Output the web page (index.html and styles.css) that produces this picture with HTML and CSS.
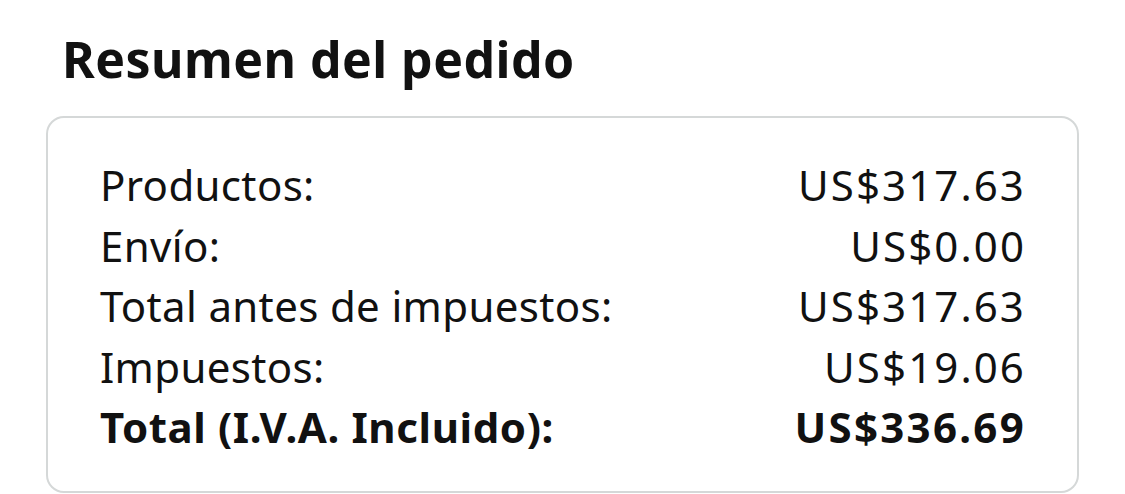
FILE: index.html
```html
<!DOCTYPE html>
<html lang="es">
<head>
<meta charset="utf-8">
<link rel="stylesheet" href="styles.css">
</head>
<body>
<main class="page">
  <h1 class="title">Resumen del pedido</h1>
  <section class="summary">
    <div class="row"><span class="label">Productos:</span><span class="value">US$317.63</span></div>
    <div class="row"><span class="label">Envío:</span><span class="value">US$0.00</span></div>
    <div class="row"><span class="label">Total antes de impuestos:</span><span class="value">US$317.63</span></div>
    <div class="row"><span class="label">Impuestos:</span><span class="value">US$19.06</span></div>
    <div class="row total"><span class="label">Total (I.V.A. Incluido):</span><span class="value">US$336.69</span></div>
  </section>
</main>
</body>
</html>
```

FILE: styles.css
```css
html, body {
  margin: 0;
  padding: 0;
  background: #ffffff;
}
body {
  font-family: "Noto Sans", "Open Sans", sans-serif;
  color: #111111;
}
.page {
  padding: 0 46px;
  width: 1033px;
}
.title {
  margin: 0;
  padding: 27px 0 0 16px;
  font-size: 50px;
  font-weight: 700;
  line-height: 64px;
  height: 89px;
  letter-spacing: 0.45px;
}
.summary {
  border: 2px solid #d5d8d8;
  border-radius: 18px;
  padding: 37px 53px 30px 52px;
  height: 306px;
}
.row {
  display: flex;
  justify-content: space-between;
  font-size: 42px;
  line-height: 60.5px;
}
.label {
  letter-spacing: 0.35px;
}
.value {
  letter-spacing: 2.1px;
  margin-right: -2px;
}
.total {
  font-weight: 700;
}
.total .label {
  letter-spacing: 0.6px;
}
.total .value {
  letter-spacing: 2.3px;
}
```
